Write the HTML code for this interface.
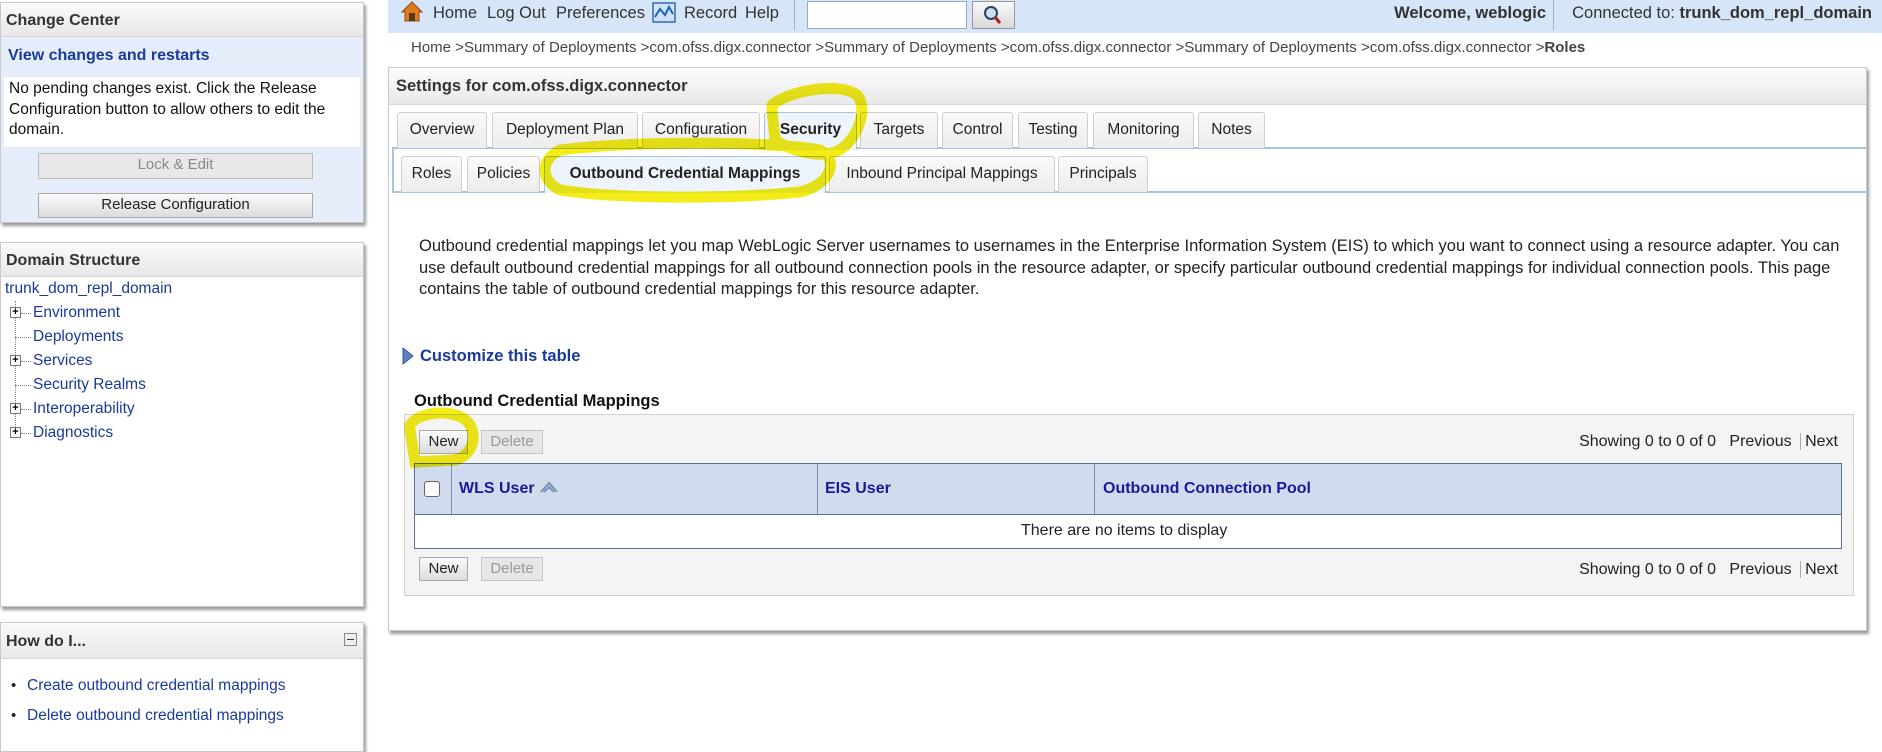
<!DOCTYPE html>
<html><head><meta charset="utf-8"><style>
*{box-sizing:border-box;margin:0;padding:0}
body{width:1882px;height:742px;overflow:hidden;background:#fff;font-family:"Liberation Sans",Tahoma,sans-serif;font-size:15px;color:#222;position:relative}
.abs{position:absolute;white-space:nowrap}
.panel{position:absolute;left:0;width:364px;border:1px solid #c8c8c8;background:#fff;box-shadow:2px 3px 3px #999}
.ph{height:34px;background:linear-gradient(#fafafa,#e8e8e8);border-bottom:1px solid #d6d6d6;font-weight:bold;font-size:16px;color:#333;padding:9px 5px}
.btn{position:absolute;border:1px solid #a9a9a9;background:linear-gradient(#fafafa,#dcdcdc);text-align:center;font-size:15px;color:#222;line-height:22px}
a,.lnk{color:#1a3a9a;text-decoration:none}
.tab{position:absolute;top:112px;height:36px;border:1px solid #cfcfcf;border-bottom:none;border-radius:3px 3px 0 0;background:linear-gradient(#fafafa,#ececec);text-align:center;line-height:34px;font-size:15.5px;color:#222}
.st{position:absolute;top:156px;height:36px;border:1px solid #cfcfcf;border-bottom:none;border-radius:3px 3px 0 0;background:linear-gradient(#fafafa,#ececec);text-align:center;line-height:34px;font-size:15.5px;color:#222}
.tree{position:absolute;left:32px;color:#1a3a9a;font-size:15.5px}
.plus{position:absolute;left:9px;width:11px;height:11px;border:1px solid #777;background:#fff;font-size:11px;line-height:9px;text-align:center;color:#000;font-weight:bold}
.th{position:absolute;top:463px;height:52px;line-height:52px;font-weight:bold;color:#1a1a9a;font-size:16px}
</style></head><body>

<div class="panel" style="top:2px;height:221px;background:#e6edfa">
 <div class="ph" style="height:34px">Change Center</div>
 <div style="height:38px;padding:10px 7px;font-weight:bold;color:#1a3a9a;font-size:16px">View changes and restarts</div>
 <div style="margin:2px 3px;background:#fff;height:70px;padding:2px 5px;font-size:15.5px;line-height:20.5px;color:#111">No pending changes exist. Click the Release Configuration button to allow others to edit the domain.</div>
 <div class="btn" style="left:37px;top:150px;width:275px;height:26px;color:#888;background:#e8e8e8;border-color:#bbb">Lock &amp; Edit</div>
 <div class="btn" style="left:37px;top:190px;width:275px;height:25px">Release Configuration</div>
</div>

<div class="panel" style="top:242px;height:365px">
 <div class="ph">Domain Structure</div>
 <div class="abs" style="left:4px;top:37px;color:#1a3a9a;font-size:15.5px">trunk_dom_repl_domain</div>
 <div style="position:absolute;left:14px;top:58px;height:132px;border-left:1px dotted #888"></div>
 <div style="position:absolute;left:14px;top:94px;width:16px;border-top:1px dotted #888"></div>
 <div style="position:absolute;left:14px;top:142px;width:16px;border-top:1px dotted #888"></div>
 <div style="position:absolute;left:20px;top:70px;width:10px;border-top:1px dotted #888"></div>
 <div style="position:absolute;left:20px;top:118px;width:10px;border-top:1px dotted #888"></div>
 <div style="position:absolute;left:20px;top:166px;width:10px;border-top:1px dotted #888"></div>
 <div style="position:absolute;left:20px;top:190px;width:10px;border-top:1px dotted #888"></div>
 <div class="plus" style="top:64px">+</div>
 <div class="plus" style="top:112px">+</div>
 <div class="plus" style="top:160px">+</div>
 <div class="plus" style="top:184px">+</div>
 <div class="tree abs" style="top:61px">Environment</div>
 <div class="tree abs" style="top:85px">Deployments</div>
 <div class="tree abs" style="top:109px">Services</div>
 <div class="tree abs" style="top:133px">Security Realms</div>
 <div class="tree abs" style="top:157px">Interoperability</div>
 <div class="tree abs" style="top:181px">Diagnostics</div>
</div>

<div class="panel" style="top:622px;height:130px">
 <div class="ph" style="height:36px;padding-top:10px">How do I...</div>
 <div style="position:absolute;left:343px;top:10px;width:13px;height:13px;border:1px solid #888;background:#eee"><div style="margin:5px 2px;border-top:1px solid #333"></div></div>
 <div class="abs" style="left:10px;top:54px;font-size:15px">•</div>
 <div class="abs lnk" style="left:26px;top:54px;font-size:15.5px">Create outbound credential mappings</div>
 <div class="abs" style="left:10px;top:84px;font-size:15px">•</div>
 <div class="abs lnk" style="left:26px;top:84px;font-size:15.5px">Delete outbound credential mappings</div>
</div>

<div style="position:absolute;left:388px;top:0;width:1494px;height:33px;background:#d6e5f7"></div>
<svg class="abs" style="left:401px;top:1px" width="22" height="22" viewBox="0 0 22 22"><path d="M11 1 L21 11 L18 11 L18 20 L4 20 L4 11 L1 11 Z" fill="#e07a20" stroke="#8a4a10"/><rect x="8" y="12" width="6" height="8" fill="#5a3a1a"/></svg>
<div class="abs" style="left:433px;top:4px;font-size:16.5px;color:#333">Home</div>
<div class="abs" style="left:487px;top:4px;font-size:16.5px;color:#333">Log Out</div>
<div class="abs" style="left:556px;top:4px;font-size:16.5px;color:#333">Preferences</div>
<svg class="abs" style="left:652px;top:2px" width="24" height="21" viewBox="0 0 24 21"><rect x="1" y="1" width="22" height="19" fill="#cfe3f7" stroke="#3a6ab0" stroke-width="1.5"/><path d="M3 15 L8 7 L13 13 L17 5 L21 12" fill="none" stroke="#2060c0" stroke-width="2"/></svg>
<div class="abs" style="left:684px;top:4px;font-size:16.5px;color:#333">Record</div>
<div class="abs" style="left:745px;top:4px;font-size:16.5px;color:#333">Help</div>
<div style="position:absolute;left:794px;top:0;height:30px;border-left:1px solid #aab"></div>
<div style="position:absolute;left:807px;top:1px;width:160px;height:28px;background:#fff;border:1px solid #9ab"></div>
<div style="position:absolute;left:972px;top:1px;width:43px;height:28px;border:1px solid #999;background:linear-gradient(#fafafa,#d8d8d8)"><svg width="41" height="26" viewBox="0 0 41 26"><circle cx="18" cy="11" r="6" fill="#cde" stroke="#246" stroke-width="2"/><path d="M22 15 L27 21" stroke="#b02020" stroke-width="3"/></svg></div>
<div class="abs" style="right:336px;top:4px;font-size:16.5px;font-weight:bold;color:#333">Welcome, weblogic</div>
<div style="position:absolute;left:1553px;top:0;height:30px;border-left:1px solid #aab"></div>
<div class="abs" style="right:10px;top:4px;font-size:16.5px;color:#333">Connected to: <b>trunk_dom_repl_domain</b></div>

<div class="abs" style="left:411px;top:39px;font-size:15px;color:#444">Home &gt;Summary of Deployments &gt;com.ofss.digx.connector &gt;Summary of Deployments &gt;com.ofss.digx.connector &gt;Summary of Deployments &gt;com.ofss.digx.connector &gt;<b>Roles</b></div>

<div style="position:absolute;left:388px;top:67px;width:1479px;height:564px;border:1px solid #c8c8c8;box-shadow:2px 3px 3px #999;background:#fff"></div>
<div style="position:absolute;left:389px;top:68px;width:1477px;height:37px;background:linear-gradient(#fdfdfd,#e8e8e8);border-bottom:1px solid #d8d8d8"></div>
<div class="abs" style="left:396px;top:77px;font-size:16.5px;font-weight:bold;color:#333">Settings for com.ofss.digx.connector</div>

<div style="position:absolute;left:392px;top:147px;width:1474px;border-top:2px solid #a9c3de"></div>
<div class="tab" style="left:397px;width:90px">Overview</div>
<div class="tab" style="left:492px;width:146px">Deployment Plan</div>
<div class="tab" style="left:642px;width:118px">Configuration</div>
<div class="tab" style="left:764px;width:93px;background:#eef4fb;font-weight:bold;height:38px;border-color:#a9c3de">Security</div>
<div class="tab" style="left:860px;width:78px">Targets</div>
<div class="tab" style="left:942px;width:71px">Control</div>
<div class="tab" style="left:1018px;width:70px">Testing</div>
<div class="tab" style="left:1093px;width:101px">Monitoring</div>
<div class="tab" style="left:1198px;width:67px">Notes</div>

<div style="position:absolute;left:392px;top:149px;height:43px;border-left:2px solid #a9c3de"></div>
<div style="position:absolute;left:392px;top:191px;width:1474px;border-top:2px solid #a9c3de"></div>
<div class="st" style="left:401px;width:61px">Roles</div>
<div class="st" style="left:467px;width:73px">Policies</div>
<div class="st" style="left:544px;width:282px;background:#eef4fb;font-weight:bold;height:37px;border-color:#a9c3de">Outbound Credential Mappings</div>
<div class="st" style="left:829px;width:226px">Inbound Principal Mappings</div>
<div class="st" style="left:1058px;width:90px">Principals</div>

<div class="abs" style="left:419px;top:236px;font-size:16.5px;line-height:21.6px;color:#222">Outbound credential mappings let you map WebLogic Server usernames to usernames in the Enterprise Information System (EIS) to which you want to connect using a resource adapter. You can<br>use default outbound credential mappings for all outbound connection pools in the resource adapter, or specify particular outbound credential mappings for individual connection pools. This page<br>contains the table of outbound credential mappings for this resource adapter.</div>

<svg class="abs" style="left:402px;top:347px" width="12" height="18" viewBox="0 0 12 18"><path d="M1 1 L11 9 L1 17 Z" fill="#5a82c0" stroke="#3a5a9a"/></svg>
<div class="abs" style="left:420px;top:347px;font-size:16.5px;font-weight:bold;color:#1a3a9a">Customize this table</div>

<div class="abs" style="left:414px;top:392px;font-size:16.5px;font-weight:bold;color:#111">Outbound Credential Mappings</div>

<div style="position:absolute;left:404px;top:414px;width:1450px;height:182px;background:#f4f4f4;border:1px solid #d0d0d0"></div>
<div class="btn" style="left:419px;top:430px;width:49px;height:24px">New</div>
<div class="btn" style="left:481px;top:430px;width:62px;height:24px;color:#999;background:#e6e6e6;border-color:#c4c4c4">Delete</div>
<div class="abs" style="right:44px;top:433px;font-size:16px;color:#222">Showing 0 to 0 of 0 &nbsp; Previous <span style="border-left:1px solid #aaa;margin:0 4px"></span> Next</div>

<div style="position:absolute;left:414px;top:463px;width:1428px;height:86px;border:1px solid #5a7090;background:#fff"></div>
<div style="position:absolute;left:415px;top:464px;width:1426px;height:51px;background:#d0dcee;border-bottom:1px solid #5a7090"></div>
<div style="position:absolute;left:451px;top:464px;height:51px;border-left:1px solid #7a90b0"></div>
<div style="position:absolute;left:817px;top:464px;height:51px;border-left:1px solid #7a90b0"></div>
<div style="position:absolute;left:1094px;top:464px;height:51px;border-left:1px solid #7a90b0"></div>
<div style="position:absolute;left:424px;top:481px;width:16px;height:16px;border:1px solid #666;border-radius:3px;background:#fff"></div>
<div class="th abs" style="left:459px">WLS User <svg width="20" height="14" viewBox="0 0 20 14" style="vertical-align:-1px"><path d="M2 12 L10 3 L18 12 M5 12 L10 7 L15 12" fill="none" stroke="#7a90b0" stroke-width="2"/></svg></div>
<div class="th abs" style="left:825px">EIS User</div>
<div class="th abs" style="left:1103px">Outbound Connection Pool</div>
<div class="abs" style="left:1021px;top:522px;font-size:16px;color:#222">There are no items to display</div>

<div class="btn" style="left:419px;top:557px;width:49px;height:24px">New</div>
<div class="btn" style="left:481px;top:557px;width:62px;height:24px;color:#999;background:#e6e6e6;border-color:#c4c4c4">Delete</div>
<div class="abs" style="right:44px;top:561px;font-size:16px;color:#222">Showing 0 to 0 of 0 &nbsp; Previous <span style="border-left:1px solid #aaa;margin:0 4px"></span> Next</div>

<svg style="position:absolute;left:0;top:0;mix-blend-mode:multiply" width="1882" height="742">
 <g fill="none" stroke="#f2ea00" stroke-width="11" stroke-linecap="round" opacity="0.9">
  <path d="M772 105 C790 90 840 82 857 95 C870 110 855 145 835 152 C815 158 790 150 775 140 L772 110"/>
  <path d="M560 150 C640 140 780 142 820 150 C840 160 830 185 800 192 C720 200 610 198 560 190 C540 180 540 160 560 150 Z"/>
  <path d="M410 425 C420 410 460 408 470 425 C478 440 470 456 455 460 L415 462 L410 430"/>
 </g>
</svg>
</body></html>
